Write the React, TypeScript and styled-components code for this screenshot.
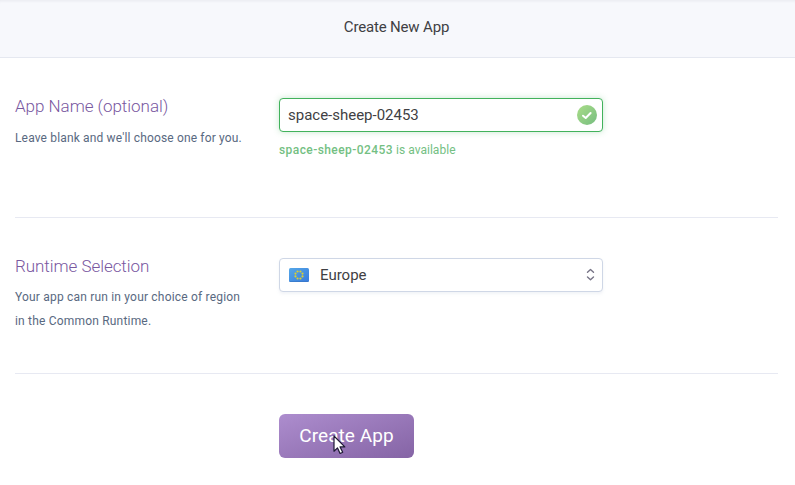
import React from "react";
import styled, { createGlobalStyle } from "styled-components";

const GlobalStyle = createGlobalStyle`
  * { box-sizing: border-box; }
  body {
    margin: 0;
    background: #fff;
    font-family: Roboto, "Liberation Sans", sans-serif;
    color: #3f3f44;
    overflow: hidden;
  }
`;

const Page = styled.div`
  height: 485px;
  overflow: hidden;
`;

const Header = styled.header`
  height: 58px;
  padding-bottom: 3px;
  padding-right: 2px;
  display: flex;
  align-items: center;
  justify-content: center;
  background: #f7f8fc;
  border-bottom: 1px solid #e5e8f0;
  box-shadow: inset 0 3px 3px -2px rgba(60, 60, 90, 0.08);
`;

const Title = styled.h1`
  margin: 0;
  font-size: 15px;
  line-height: 20px;
  font-weight: 400;
  letter-spacing: -0.17px;
`;

const Form = styled.form`
  margin: 0 17px 0 15px;
`;

const Section = styled.section<{ $height: number }>`
  display: grid;
  grid-template-columns: 264px 324px;
  align-items: start;
  height: ${(p) => p.$height}px;
  padding-top: 40px;
  border-bottom: 1px solid #e7e9f2;
`;

const Heading = styled.h2<{ $tracking: number; $gap: number }>`
  margin: -3px 0 ${(p) => p.$gap}px;
  font-size: 17px;
  line-height: 22px;
  font-weight: 300;
  letter-spacing: ${(p) => p.$tracking}px;
  color: #79589f;
`;

const Description = styled.p<{ $tracking: number }>`
  margin: 0;
  font-size: 12px;
  line-height: 24px;
  letter-spacing: ${(p) => p.$tracking}px;
  color: #596981;
  white-space: nowrap;
`;

const Control = styled.div<{ $valid?: boolean }>`
  height: 34px;
  display: flex;
  align-items: center;
  padding: 0 5px 0 ${(p) => (p.$valid ? 8 : 9)}px;
  background: #fff;
  border: 1px solid ${(p) => (p.$valid ? "#42b25c" : "#cfd7e6")};
  border-radius: 4px;
  box-shadow: ${(p) =>
    p.$valid ? "0 0 6px rgba(66, 178, 92, 0.3)" : "0 2px 3px rgba(207, 215, 230, 0.3)"};
`;

const NameInput = styled.input`
  flex: 1;
  min-width: 0;
  padding: 0;
  border: 0;
  outline: 0;
  background: none;
  font: 400 15px/20px Roboto, "Liberation Sans", sans-serif;
  letter-spacing: -0.01px;
  color: #3f3f44;
`;

const Selected = styled.span`
  flex: 1;
  margin-left: 11px;
  font-size: 15px;
  line-height: 20px;
`;

const Availability = styled.p`
  margin: 8px 0 0;
  font-size: 12px;
  line-height: 20px;
  letter-spacing: 0.04px;
  color: #74bf83;

  strong {
    font-weight: 500;
    letter-spacing: 0.42px;
  }
`;

const Actions = styled.div`
  display: flex;
  padding: 40px 0 0 264px;
`;

const SubmitButton = styled.button`
  position: relative;
  width: 135px;
  height: 44px;
  padding: 0;
  border: 0;
  border-radius: 6px;
  background: linear-gradient(160deg, #ad8dce 0%, #8564a5 100%);
  color: #fff;
  font: 400 19px/44px Roboto, "Liberation Sans", sans-serif;
  letter-spacing: 0.05px;
`;

const Pointer = styled.svg`
  position: absolute;
  left: 54px;
  top: 21px;
`;

function CheckIcon() {
  return (
    <svg width="20" height="20" viewBox="0 0 20 20">
      <defs>
        <linearGradient id="check" x1="0" y1="0" x2="1" y2="1">
          <stop offset="0" stopColor="#aadd88" />
          <stop offset="1" stopColor="#76bd80" />
        </linearGradient>
      </defs>
      <circle cx="10" cy="10" r="10" fill="url(#check)" />
      <path d="M6 10.7 8.7 13 13.6 8" fill="none" stroke="#fff" strokeWidth="2" strokeLinecap="round" strokeLinejoin="round" />
    </svg>
  );
}

function EuropeFlag() {
  return (
    <svg width="20" height="14" viewBox="0 0 20 14">
      <defs>
        <linearGradient id="flag" x1="0" y1="0" x2="1" y2="1">
          <stop offset="0" stopColor="#55a8e8" />
          <stop offset="1" stopColor="#397bdc" />
        </linearGradient>
      </defs>
      <rect width="20" height="14" rx="1.5" fill="url(#flag)" />
      <path d="M.5 13.5h19" stroke="#3473c2" strokeOpacity=".6" />
      {Array.from({ length: 8 }, (_, i) => {
        const a = ((i + 0.5) * Math.PI) / 4;
        return <circle key={i} cx={10 + 3.8 * Math.cos(a)} cy={7 + 3.8 * Math.sin(a)} r="1.1" fill="#dccf30" />;
      })}
    </svg>
  );
}

function SelectArrows() {
  return (
    <svg width="12" height="14" viewBox="0 0 12 14" fill="none" stroke="#777486" strokeWidth="1.4" strokeLinecap="round" strokeLinejoin="round">
      <path d="M2.5 4.2 5.5 1.5 8.5 4.2M2.5 9 5.5 11.7 8.5 9" />
    </svg>
  );
}

export default function App() {
  return (
    <Page>
      <GlobalStyle />
      <Header>
        <Title>Create New App</Title>
      </Header>
      <Form>
        <Section $height={160}>
          <div>
            <Heading $tracking={-0.03} $gap={9}>App Name (optional)</Heading>
            <Description $tracking={0.155}>Leave blank and we'll choose one for you.</Description>
          </div>
          <div>
            <Control $valid>
              <NameInput defaultValue="space-sheep-02453" spellCheck={false} />
              <CheckIcon />
            </Control>
            <Availability>
              <strong>space-sheep-02453</strong> is available
            </Availability>
          </div>
        </Section>
        <Section $height={156}>
          <div>
            <Heading $tracking={-0.05} $gap={8}>Runtime Selection</Heading>
            <Description $tracking={0.19}>
              Your app can run in your choice of region
              <br />
              in the Common Runtime.
            </Description>
          </div>
          <Control>
            <EuropeFlag />
            <Selected>Europe</Selected>
            <SelectArrows />
          </Control>
        </Section>
        <Actions>
          <SubmitButton type="button">
            Create App
            <Pointer width="14" height="20" viewBox="0 0 14 20">
              <path d="M1 1v15.2l3.5-3.3 2.6 5.6 2.6-1.2-2.6-5.4h4.7z" fill="#fff" stroke="#1c1833" strokeWidth="1.2" strokeLinejoin="round" />
            </Pointer>
          </SubmitButton>
        </Actions>
      </Form>
    </Page>
  );
}
